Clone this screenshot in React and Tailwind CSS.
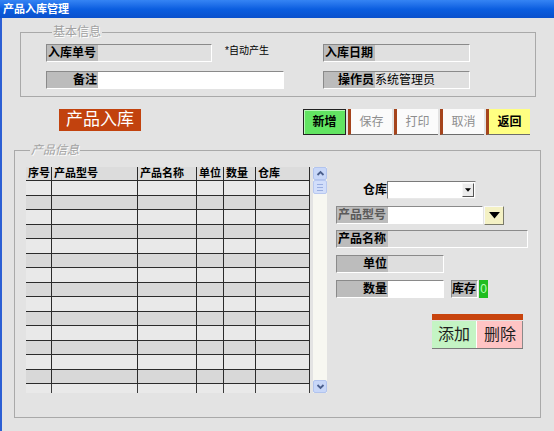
import React from "react";

const Box = ({ label, w, fill = "bg-[#dedede]", right = false, value, labelText = "text-black" }) => (
  <div className={`flex h-[18px] border border-[#8a8a8a] border-b-white border-r-white ${w}`}>
    <div
      className={`w-[51px] shrink-0 bg-[#bcbcbc] flex items-center whitespace-nowrap font-bold text-[12px] leading-[16px] ${labelText} ${
        right ? "justify-end pr-[1px]" : "pl-[1px]"
      }`}
    >
      {label}
    </div>
    <div className={`flex-1 flex items-center whitespace-nowrap text-[12px] leading-[16px] ${fill}`}>{value}</div>
  </div>
);

const ToolBtn = ({ children, cls }) => (
  <div className={`h-[26px] flex items-center justify-center text-[12px] leading-[14px] ${cls}`}>{children}</div>
);

const cols = [
  { w: "w-[26px]", t: "序号" },
  { w: "w-[86px]", t: "产品型号" },
  { w: "w-[59px]", t: "产品名称" },
  { w: "w-[27px]", t: "单位" },
  { w: "w-[32px]", t: "数量" },
  { w: "w-[54px]", t: "仓库" },
];

const rows = Array.from({ length: 14 }, (_, i) => i);

const Chevron = ({ up }) => (
  <svg width="9" height="7" viewBox="0 0 9 7">
    <path
      d={up ? "M1.5 5 L4.5 2 L7.5 5" : "M1.5 2 L4.5 5 L7.5 2"}
      fill="none"
      stroke="#4b5f8c"
      strokeWidth="1.8"
    />
  </svg>
);

const Caret = ({ size = 10 }) => (
  <svg width={size} height={size / 2 + 1} viewBox="0 0 10 6">
    <path d="M0 0 L10 0 L5 6 Z" fill="#000" />
  </svg>
);

export default function App() {
  return (
    <div className="w-[554px] h-[431px] flex flex-col bg-[#e3e3e3] overflow-hidden font-['Liberation_Sans','Noto_Sans_CJK_SC',sans-serif] text-black">
      {/* title bar */}
      <div className="h-[18px] shrink-0 bg-gradient-to-b from-[#3584f4] via-[#0b5ee0] to-[#0a50cc] flex items-center pl-[3px]">
        <span className="text-white font-bold text-[11px] leading-[12px]">产品入库管理</span>
      </div>

      <div className="flex-1 border-l-2 border-[#2c5fd4] flex flex-col">
        {/* 基本信息 */}
        <fieldset className="ml-[18px] mt-[8px] w-[516px] h-[71px] border border-[#a9a9a9] pl-[25px] pt-[6px]">
          <legend className="ml-[6px] px-[1px] text-[12px] leading-[12px] text-[#a2a2a2] [text-shadow:1px_1px_0_#fff]">
            基本信息
          </legend>
          <div className="flex">
            <div className="w-[277px] flex">
              <Box label="入库单号" w="w-[166px]" fill="bg-[#e0e0e0]" />
              <div className="ml-[13px] mt-[1px] text-[10px] leading-[12px]">*自动产生</div>
            </div>
            <Box label="入库日期" w="w-[147px]" fill="bg-[#e0e0e0]" />
          </div>
          <div className="flex mt-[9px]">
            <div className="w-[277px] flex">
              <Box label="备注" right w="w-[238px]" fill="bg-white" />
            </div>
            <Box label="操作员" right w="w-[147px]" fill="bg-[#e0e0e0]" value="系统管理员" />
          </div>
        </fieldset>

        {/* header row */}
        <div className="flex mt-[12px] h-[27px]">
          <div className="ml-[57px] w-[82px] h-[22px] bg-[#c2420e] text-white text-[17px] leading-[22px] flex items-center justify-center">
            产品入库
          </div>
          <div className="ml-[162px] flex gap-[2px]">
            <ToolBtn cls="w-[43px] bg-[#62e462] border border-[#222] font-bold shadow-[inset_1px_1px_0_#b8f8b8]">新增</ToolBtn>
            <ToolBtn cls="w-[44px] bg-[#fbfbfb] text-[#8e8e8e] border-l-[3px] border-l-[#a5441c] border-b border-b-[#6c6c6c]">保存</ToolBtn>
            <ToolBtn cls="w-[44px] bg-[#fbfbfb] text-[#8e8e8e] border-l-[3px] border-l-[#a5441c] border-b border-b-[#6c6c6c]">打印</ToolBtn>
            <ToolBtn cls="w-[44px] bg-[#fbfbfb] text-[#8e8e8e] border-l-[3px] border-l-[#a5441c] border-b border-b-[#6c6c6c]">取消</ToolBtn>
            <ToolBtn cls="w-[44px] bg-[#ffff82] font-bold border-l-[3px] border-l-[#a5441c] border-b border-b-[#6c6c6c]">返回</ToolBtn>
          </div>
        </div>

        {/* 产品信息 */}
        <fieldset className="ml-[12px] mt-[8px] w-[527px] h-[274px] border border-[#a9a9a9] pl-[11px] pt-[11px]">
          <legend className="ml-[4px] px-[1px] text-[12px] leading-[12px] italic text-[#a2a2a2] [text-shadow:1px_1px_0_#fff]">
            产品信息
          </legend>
          <div className="flex items-start">
            {/* table */}
            <div className="w-[284px] flex flex-col">
              <div className="flex h-[14px] bg-[#dcdcdc] border-b border-[#2b2b2b]">
                {cols.map((c) => (
                  <div
                    key={c.t}
                    className={`${c.w} h-full border-r border-[#2b2b2b] pl-[2px] whitespace-nowrap font-bold text-[11px] leading-[13px]`}
                  >
                    {c.t}
                  </div>
                ))}
              </div>
              {rows.map((r) => (
                <div
                  key={r}
                  className={`flex h-[14.5px] border-b border-[#2b2b2b] ${r % 2 ? "bg-[#d8d8d8]" : "bg-[#e9e9e9]"}`}
                >
                  {cols.map((c) => (
                    <div key={c.t} className={`${c.w} h-full border-r border-[#2b2b2b]`} />
                  ))}
                </div>
              ))}
              <div className="flex h-[9px] bg-[#e9e9e9]">
                {cols.map((c) => (
                  <div key={c.t} className={`${c.w} h-full border-r border-[#3a3a3a]`} />
                ))}
              </div>
            </div>

            {/* scrollbar */}
            <div className="ml-[3px] w-[14px] h-[226px] flex flex-col bg-[#f7f7f1]">
              <div className="h-[13px] bg-[#c8d7f8] rounded-[2px] border border-[#b2c4ee] flex items-center justify-center">
                <Chevron up />
              </div>
              <div className="h-[14px] bg-[#d2defa] border border-[#b8c8f0] rounded-[2px] flex flex-col items-center justify-center gap-[2px]">
                <div className="w-[6px] h-px bg-[#9aaee0]" />
                <div className="w-[6px] h-px bg-[#9aaee0]" />
                <div className="w-[6px] h-px bg-[#9aaee0]" />
              </div>
              <div className="flex-1" />
              <div className="h-[13px] bg-[#c8d7f8] rounded-[2px] border border-[#b2c4ee] flex items-center justify-center">
                <Chevron />
              </div>
            </div>

            {/* right panel */}
            <div className="ml-[9px] mt-[14px] w-[192px] flex flex-col">
              <div className="flex h-[18px]">
                <div className="w-[51px] flex items-center justify-end font-bold text-[12px] leading-[16px]">仓库</div>
                <div className="w-[89px] h-[18px] bg-white border border-[#7a7a7a] border-b-[#e8e8e8] border-r-[#e8e8e8] flex justify-end items-center pr-[1px]">
                  <div className="w-[12px] h-[14px] bg-[#ececec] border border-[#f8f8f8] border-b-[#555] border-r-[#555] flex items-center justify-center">
                    <Caret size={6} />
                  </div>
                </div>
              </div>

              <div className="flex mt-[7px] h-[19px]">
                <Box label="产品型号" w="w-[147px]" fill="bg-white" labelText="text-[#5a5a5a]" />
                <div className="ml-[1px] w-[20px] h-[19px] bg-[#f4f1c4] border border-[#f8f8f8] border-b-[#7a7a6a] border-r-[#7a7a6a] flex items-center justify-center">
                  <Caret size={11} />
                </div>
              </div>

              <div className="mt-[5px]">
                <Box label="产品名称" w="w-[192px]" fill="bg-[#dedede]" />
              </div>

              <div className="mt-[7px]">
                <Box label="单位" right w="w-[108px]" fill="bg-[#dedede]" />
              </div>

              <div className="flex mt-[7px] items-center">
                <Box label="数量" right w="w-[108px]" fill="bg-white" />
                <div className="ml-[7px] w-[27px] h-[18px] bg-[#bcbcbc] border border-[#8a8a8a] border-b-white border-r-white whitespace-nowrap font-bold text-[12px] leading-[16px] flex items-center">
                  库存
                </div>
                <div className="ml-[1px] w-[9px] h-[18px] bg-[#1fbd1f] text-[#b6ffb6] text-[12px] leading-[16px] flex items-center justify-center">
                  0
                </div>
              </div>

              <div className="ml-[96px] mt-[16px] w-[91px] flex flex-col">
                <div className="h-[6px] bg-[#c8440e]" />
                <div className="flex h-[27px] mt-[1px] shadow-[0_1px_0_#7a7a7a]">
                  <div className="w-[45px] bg-[#c4f4c4] flex items-center justify-center text-[16px] leading-[18px] text-[#1e1e1e] border-r border-white">
                    添加
                  </div>
                  <div className="flex-1 bg-[#ffc4c4] flex items-center justify-center text-[16px] leading-[18px] text-[#1e1e1e] shadow-[inset_-1px_0_0_#8a8a8a]">
                    删除
                  </div>
                </div>
              </div>
            </div>
          </div>
        </fieldset>
      </div>
    </div>
  );
}
